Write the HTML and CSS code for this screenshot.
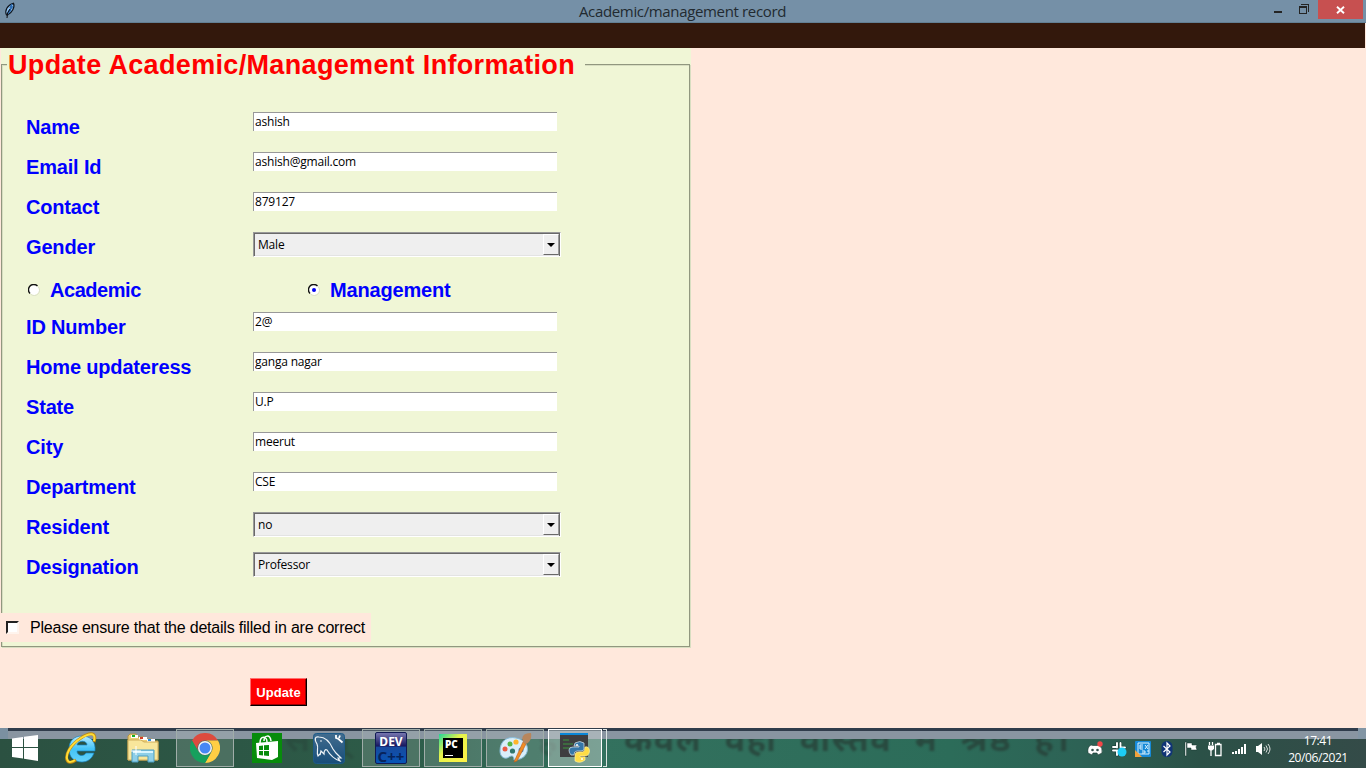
FILE: index.html
```html
<!DOCTYPE html>
<html lang="en">
<head>
<meta charset="utf-8">
<title>Academic/management record</title>
<link rel="stylesheet" href="styles.css">
</head>
<body>
<div class="screen">
  <header class="titlebar">
    <svg class="feather" width="12" height="17" viewBox="0 0 12 17"><path d="M2.5 13C.5 9 3 3 9.500 1.300C11.200 5 8 11 3.500 13Z" fill="#8fc0ee" stroke="#10151c" stroke-width="1.200"/><path d="M8 2L6.500 5L8 5L5 9L6 9L3.500 12" fill="none" stroke="#2766ad" stroke-width="1.500"/><path d="M6 7L3.500 11L3 16" fill="none" stroke="#0b0c10"/></svg>
    <h1 class="caption">Academic/management record</h1>
    <div class="controls">
      <svg class="ctl" width="46" height="19" viewBox="0 0 46 19" shape-rendering="crispEdges"><path d="M2 11h8v2H2z" fill="#242424"/><path d="M27.500 7.500h7v6h-7z M27 6.500h8" fill="none" stroke="#242424"/><path d="M29 4.500h7.500V12" fill="none" stroke="#242424"/></svg>
      <div class="close"><svg width="9" height="8" viewBox="0 0 9 8"><path d="M1 .8L8 7.200M8 .8L1 7.200" stroke="#fff" stroke-width="1.900"/></svg></div>
    </div>
  </header>
  <div class="band"></div>
  <main class="client">
    <section class="frame">
      <h2 class="legend"><span>Update Academic/Management Information</span></h2>
      <form class="form">
        <label class="label">Name</label><input class="entry" value="ashish">
        <label class="label">Email Id</label><input class="entry" value="ashish@gmail.com">
        <label class="label">Contact</label><input class="entry" value="879127">
        <label class="label">Gender</label><div class="combo"><span>Male</span><i class="drop"></i></div>
        <div class="radios">
          <div class="radio academic"><svg width="12" height="12" viewBox="0 0 12 12"><circle cx="6" cy="6" r="5" fill="#fff"/><path d="M2 9.500A5 5 0 0 1 9.500 2" fill="none" stroke="#111" stroke-width="1.400"/><path d="M2.500 10A5.300 5.300 0 0 0 10 2.500" fill="none" stroke="#dce1c8"/></svg><span>Academic</span></div>
          <div class="radio"><svg width="12" height="12" viewBox="0 0 12 12"><circle cx="6" cy="6" r="5" fill="#fff"/><path d="M2 9.500A5 5 0 0 1 9.500 2" fill="none" stroke="#111" stroke-width="1.400"/><path d="M2.500 10A5.300 5.300 0 0 0 10 2.500" fill="none" stroke="#dce1c8"/><circle cx="6" cy="6" r="2" fill="#0000f0"/></svg><span>Management</span></div>
        </div>
        <label class="label">ID Number</label><input class="entry" value="2@">
        <label class="label">Home updateress</label><input class="entry" value="ganga nagar">
        <label class="label">State</label><input class="entry" value="U.P">
        <label class="label">City</label><input class="entry" value="meerut">
        <label class="label">Department</label><input class="entry" value="CSE">
        <label class="label">Resident</label><div class="combo"><span>no</span><i class="drop"></i></div>
        <label class="label">Designation</label><div class="combo"><span>Professor</span><i class="drop"></i></div>
      </form>
      <div class="confirm"><i class="check"></i><span>Please ensure that the details filled in are correct</span></div>
    </section>
    <button class="update">Update</button>
  </main>
  <footer class="taskbar">
    <div class="wall w1">स&nbsp; म्</div><div class="wall w3">हा हो,</div><div class="wall w2">केवल वही वास्तव में श्रेष्ठ है।</div>
    <div class="glass"></div>
    <nav class="apps">
      <div class="app start"><svg width="28" height="28" viewBox="0 0 28 28"><path d="M1 4.500L12 3V13H1zM13 2.800L27 1V13H13zM1 14H12V24.500L1 23zM13 14H27V27L13 24.800z" fill="#fff"/></svg></div>
      <div class="app ie"><svg width="32" height="32" viewBox="0 0 32 32"><defs><linearGradient id="ie" x2="0" y2="1"><stop stop-color="#b8ecff"/><stop offset=".5" stop-color="#43c4f7"/><stop offset="1" stop-color="#65d2fb"/></linearGradient></defs><path fill-rule="evenodd" d="M30 19H12C12 24 19 25 21 21H29C27 27 22 30 17 30C9 30 4 25 4 17C4 9 9 4 17 4C26 4 31 10 30 19ZM12 13H22C22 8 13 8 12 13Z" fill="url(#ie)" stroke="#1583c1" stroke-width=".7"/><path d="M29 10C32 1 26-1 16 6C5 13 0 23 2 28C3 32 8 30 11 28" fill="none" stroke="#bd8810" stroke-width="3"/><path d="M29 9C31 1 26 0 16 6C5 13 0 23 2.500 28C3.500 31 7 30 10 28" fill="none" stroke="#ffdc36" stroke-width="2"/></svg></div>
      <div class="app folder"><svg width="34" height="32" viewBox="0 0 34 32"><path d="M2 6V4L4 2H10L12 5H18L20 7H26L28 9H32V28H2Z" fill="#edcf75" stroke="#b69445"/><path d="M5 3h7v3H5z" fill="#fff"/><path d="M6 3h3v2H6z" fill="#16ae25"/><path d="M13 5h8v3h-8z" fill="#fff"/><path d="M14 5h3v2h-3z" fill="#d73e26"/><path d="M21 7h8v3h-8z" fill="#fff"/><path d="M22 7h3v2h-3z" fill="#268ee0"/><path d="M2 8H15L18 10H32V28H2Z" fill="#f8e69b" stroke="#cfae5c"/><path d="M6 18H28V30H22V24H12V30H6Z" fill="#8ecfe8" stroke="#4c9ec2"/><path d="M7 20H27" stroke="#d8f5ff" stroke-width="2"/><path d="M10 14V23M5 19H15" stroke="#fff"/></svg></div>
      <div class="app chrome tile"><svg width="30" height="30" viewBox="0 0 30 30"><path d="M2 7.500A15 15 0 0 1 28 7.500H15A7.500 7.500 0 0 0 8.500 18.800Z" fill="#dd4b3e"/><path d="M28 7.500A15 15 0 0 1 15 30L21.500 18.800A7.500 7.500 0 0 0 15 7.500Z" fill="#ffce44"/><path d="M15 30A15 15 0 0 1 2 7.500L8.500 18.800A7.500 7.500 0 0 0 21.500 18.800Z" fill="#16a05d"/><circle cx="15" cy="15" r="7" fill="#f3f3f3"/><circle cx="15" cy="15" r="5.500" fill="#4687f5"/></svg></div>
      <div class="app store"><svg width="30" height="30" viewBox="0 0 30 30"><path d="M0 0h30v30H0z" fill="#078c0b"/><path d="M4 10L26 8V24L20 27L5 25Z" fill="#fff"/><path d="M8 10C8 2 15 3 15 9M12 8C12 2 18 1 19 8" fill="none" stroke="#fff" stroke-width="1.500"/><path d="M7 13L11 12.500V17H7zM12 12.300L17 12V17H12zM7 18h4v4.500L7 22zM12 18h5v5l-5-.5z" fill="#078c0b"/></svg></div>
      <div class="app mysql"><svg width="32" height="31" viewBox="0 0 32 31"><defs><linearGradient id="sq" x2="0" y2="1"><stop stop-color="#426c8e"/><stop offset="1" stop-color="#174d79"/></linearGradient></defs><rect x=".5" y=".5" width="31" height="30" rx="3" fill="url(#sq)" stroke="#1d5b89"/><path d="M7 21L5 23C3 19 6 15 4 11C1 6 2 3 6 4C13 4 17 9 20 16L23 20L28 25L25 25L27 28C21 26 17 22 14 17C12 16 11 18 11 21L8 18L7 22" fill="none" stroke="#edf3f7" stroke-width="1.200"/><path d="M23 2V5L25.500 6L29.500 9.500M27 2.500L26 5" stroke="#fff" stroke-width="1.800" fill="none"/><circle cx="8" cy="8" r=".8" fill="#fff"/></svg></div>
      <div class="app dev tile"><div class="devicon"><b>DEV</b><b class="cpp">C++</b></div></div>
      <div class="app charm tile"><div class="pcicon"><div><b>PC</b><i></i></div></div></div>
      <div class="app paint tile"><svg width="33" height="32" viewBox="0 0 33 32"><path d="M17 6C8 4 1 9 1 19C1 25 6 28 10 25C13 23 15 24 15 28C25 28 30 21 28 14C26 9 22 7 17 6Z" fill="#d9eefa" stroke="#86bbd8"/><circle cx="13.500" cy="19" r="2.600" fill="#30776e"/><circle cx="6" cy="17" r="2.500" fill="#ea5b45"/><circle cx="11" cy="12" r="2.500" fill="#55b546"/><circle cx="17" cy="10" r="2.600" fill="#ffb52b"/><circle cx="22" cy="18" r="2.500" fill="#3c90d7"/><path d="M15 30L24 10L27 12L18 29Z" fill="#f28c24" stroke="#b85a1d" stroke-width=".6"/><path d="M24 10C22 5 24 1 32 1C33 6 31 10 27 12Z" fill="#b8865c"/></svg></div>
      <div class="app python tile active"><svg width="30" height="30" viewBox="0 0 30 30"><path d="M0 0h28v24H0z" fill="#3e3e40"/><path d="M0 0h28v2H0z" fill="#0887d8"/><path d="M3 7h6M3 11h10M3 15h8" stroke="#3d963e"/><path d="M15 10Q20 7 24 10V16Q24 18 21 18H17Q14 18 14 22H11Q9 20 9 17Q9 14 13 14H19V13H14Z" fill="#3676a8" stroke="#dce8ed" stroke-width=".7"/><path d="M25 14Q29 13 29.500 18Q29 23 25 23H20V24H25V27Q20 31 15 28V22Q15 19 19 19H23Q25 18 25 14Z" fill="#ffdc45" stroke="#fff2a0" stroke-width=".7"/><circle cx="17" cy="12" r="1" fill="#fff"/><circle cx="22" cy="26" r="1" fill="#fff"/></svg></div>
      <div class="stack"></div>
    </nav>
    <div class="tray">
      <svg viewBox="0 0 16 16"><path d="M1 12Q0 6 4 4L6 4.500H10L12 4Q16 7 15 12L11 14L10 12H6L5 14Z" fill="#fff" stroke="#17352f" stroke-width=".6"/><circle cx="5.500" cy="9" r="1.300" fill="#36534f"/><circle cx="10.500" cy="9" r="1.300" fill="#36534f"/><circle cx="13" cy="3" r="2.700" fill="#f14748"/></svg>
      <svg viewBox="0 0 16 16"><path d="M6 2V6.500M9.500 2V6.500M2 6H6M10 6.500H14M2 9.500H6.500M6 10V14" stroke="#17352f" stroke-width="3" stroke-linecap="round"/><path d="M6 2V6.500M9.500 2V6.500M2 6H6M10 6.500H14M2 9.500H6.500M6 10V14" stroke="#fff" stroke-width="1.900" stroke-linecap="round"/><circle cx="11" cy="11" r="4.500" fill="#1dccf5"/></svg>
      <svg viewBox="0 0 16 16"><rect width="16" height="16" rx="1" fill="#1689d8"/><path d="M3 2H14V13H3ZM5 4H8M5 4V8H8M5 6H8M10 4L13 8M13 4L10 8M7 10H10V12H7M12 10H14" fill="none" stroke="#ddf2fd"/><path d="M0 9L7 16H0Z" fill="#f2a13a"/></svg>
      <svg viewBox="0 0 16 16"><rect x="2.500" width="11" height="16" rx="5.500" fill="#103477"/><path d="M4.500 5L11 11L8 14V2L11 5L4.500 11" fill="none" stroke="#fff" stroke-width="1.200"/></svg>
      <svg viewBox="0 0 16 16"><path d="M2 1H3.500V15H2zM4 2H9V4H14L13 6L14 9H8V7H4z" fill="#fff" stroke="#17352f" stroke-width=".5"/></svg>
      <svg viewBox="0 0 16 16"><path d="M2.500 1V4M5.500 1V4M4 8V15M8.500 3.500H14V14.500H8.500zM10 2.500H13" fill="none" stroke="#fff" stroke-width="1.300"/><path d="M1 4.500H7V8L5 9.500H3L1 8z" fill="#fff"/></svg>
      <svg viewBox="0 0 16 16"><path d="M1 11h2v2H1zM4 10h2v3H4zM7 8h2v5H7zM10 6h2v7h-2zM13 3h2v10h-2z" fill="#fff"/></svg>
      <svg viewBox="0 0 16 16"><path d="M1 5H3L7 2V14L3 11H1z" fill="#fff"/><path d="M9 6Q11 8 9 10M11 4.500Q14 8 11 11.500M13 3Q17 8 13 13" fill="none" stroke="#eee" stroke-width=".9"/></svg>
    </div>
    <div class="clock"><time>17:41</time><time>20/06/2021</time></div>
  </footer>
</div>
</body>
</html>
```
FILE: styles.css
```css
*, *::before, *::after { box-sizing: border-box; }
body { margin: 0; font-family: "Liberation Sans", sans-serif; }
.screen { width: 1366px; height: 768px; display: flex; flex-direction: column; overflow: hidden; background: #ffe8dc; }
.titlebar { position: relative; height: 23px; flex: none; display: flex; justify-content: space-between; background: #7590a7; border-bottom: 1px solid #637f94; }
.feather { margin: 2px 0 0 4px; }
.caption { position: absolute; left: 0; width: 1365px; top: 2px; margin: 0; text-align: center; font: 15px/19px "Open Sans", sans-serif; letter-spacing: -.35px; color: #222a30; }
.controls { display: flex; height: 19px; padding-right: 3px; }
.ctl { margin-right: -1px; transform: translateX(-1px); }
.close { width: 45px; display: flex; align-items: center; justify-content: center; background: #c75050; }
.band { height: 25px; flex: none; margin-right: 1px; background: #33180c; }
.client { height: 680px; flex: none; }
.frame { position: relative; width: 691px; height: 600px; border-left: 1px solid #ffe8dc; background: #f0f6d6; isolation: isolate; }
.frame::before { content: ""; position: absolute; z-index: -1; left: 0; top: 16px; width: 689px; height: 583px; border: 1px solid #91977f; box-shadow: inset 1px 1px #d8dec1, 1px 1px #d8dec1; }
.legend { height: 59px; margin: 0; padding-left: 6px; font-size: 27px; line-height: 34px; letter-spacing: .34px; color: #f00; }
.legend span { display: block; width: 578px; height: 34px; padding-left: 1px; background: #f0f6d6; white-space: nowrap; }
.form { display: grid; grid-template-columns: 227px 308px; grid-auto-rows: 40px; padding-left: 25px; }
.label, .radio { font-size: 20px; font-weight: bold; line-height: 40px; letter-spacing: -.17px; color: #00f; white-space: nowrap; }
.entry { width: 304px; height: 19px; margin: 5px 0 0; padding: 0 1px 1px; border: 0 solid #999; border-width: 1px 0 0 1px; border-radius: 0; outline: 0; background: #fff; font: 12px/16px "Open Sans", sans-serif; letter-spacing: -.2px; color: #000; }
.combo { width: 308px; height: 25px; margin-top: 5px; padding: 1px 1px 0 4px; display: flex; justify-content: space-between; border: 1px solid; border-color: #999 #fff #fff #999; box-shadow: inset 1px 1px #696969, inset -1px 0 #696969, inset 0 -1px #e3e3e3; background: #efefef; font: 12px/21px "Open Sans", sans-serif; letter-spacing: -.2px; }
.drop { width: 16px; height: 21px; border: 1px solid; border-color: #fff #999 #696969 #fff; background: #efefef; display: grid; place-items: center; }
.drop::before { content: ""; border: 4px solid transparent; border-top-color: #000; border-bottom: 0; }
.radios { grid-column: 1 / 3; display: grid; grid-template-columns: 280px 1fr; padding: 3px 0 0 2px; }
.radio { display: flex; gap: 10px; align-items: center; height: 40px; }
.academic { letter-spacing: -.45px; }
.confirm { width: 371px; height: 29px; margin: 26px 0 0 -1px; padding-left: 6px; display: flex; align-items: center; gap: 11px; background: #ffe8dc; font-size: 16px; letter-spacing: -.21px; white-space: nowrap; }
.check { width: 13px; height: 13px; flex: none; border: 2px solid; border-color: #222 #fff4ed #fff4ed #222; background: #fff; }
.update { display: block; width: 57px; height: 28px; margin: 30px 0 0 250px; padding: 2px 0 0; border: 1px solid; border-color: #ff6e6e #000 #000 #ff6e6e; border-radius: 0; box-shadow: inset -1px -1px #900; background: #f00; color: #fff; font: bold 13px/22px "Liberation Sans", sans-serif; letter-spacing: .1px; }
.taskbar { position: relative; height: 40px; flex: none; display: flex; overflow: hidden; isolation: isolate; background: linear-gradient(90deg, #2b5141 0, #2d5b48 400px, #33715e 600px, #2c6c59 950px, #2d6255 1080px, #2b5147 1200px, #344b48 1366px); }
.glass { position: absolute; z-index: -1; inset: 0 0 auto; height: 11px; border-top: 3px solid #303c4b; background: #8995a1; }
.glass::before { content: ""; position: absolute; left: 0; top: -3px; width: 8px; height: 11px; background: #7b90a1; }
.glass::after { content: ""; position: absolute; right: 0; top: -3px; width: 8px; height: 11px; background: #8295a4; }
.wall { position: absolute; z-index: -2; top: 0; font: bold 34px/31px "Noto Sans Devanagari", "Noto Sans", sans-serif; white-space: nowrap; color: #273f37; opacity: .75; filter: blur(1px); }
.w1 { left: 285px; opacity: .4; }
.w2 { left: 624px; word-spacing: 12px; letter-spacing: 1.5px; }
.w3 { left: 500px; opacity: .4; }
.apps { display: flex; gap: 4px; width: 1087px; flex: none; }
.app { width: 58px; height: 38px; margin-top: 1px; flex: none; display: flex; align-items: center; justify-content: center; }
.start { margin: 1px -6px 0 -4px; }
.tile { border: 1px solid #a0ada9; background: #b9c8c538; }
.active { border-color: #fff; background: #cad5d27a; width: 54px; }
.stack { width: 4px; height: 38px; margin: 1px 0 0 -3px; border: solid #dce4e2; border-width: 1px 1px 1px 0; }
.devicon { width: 32px; height: 32px; display: flex; flex-direction: column; align-items: center; border: 1px solid #111a55; border-radius: 2px; background: linear-gradient(#7675af, #18185f 43%, #174a9e 48%, #0755b7); color: #fff; font: 12px/17px "Noto Sans", sans-serif; }
.devicon .cpp { color: #07235b; font-size: 15px; line-height: 13px; }
.pcicon { width: 28px; height: 28px; padding: 4px; background: linear-gradient(135deg, #20d79a, #e4f34c 40%, #fff247); }
.pcicon div { width: 20px; height: 20px; padding: 1px 2px; background: #000; color: #fff; font: bold 10px/11px "Noto Sans", sans-serif; }
.pcicon b { display: block; }
.pcicon i { display: block; width: 8px; margin-top: 5px; border-top: 1px solid #fff; }
.tray { display: flex; align-items: center; gap: 8px; padding-top: 2px; }
.tray svg { width: 16px; height: 16px; flex: none; }
.clock { display: flex; flex-direction: column; width: 94px; padding-top: 4px; text-align: center; color: #fff; font: 12px/17px "Open Sans", sans-serif; letter-spacing: -.4px; }
```
